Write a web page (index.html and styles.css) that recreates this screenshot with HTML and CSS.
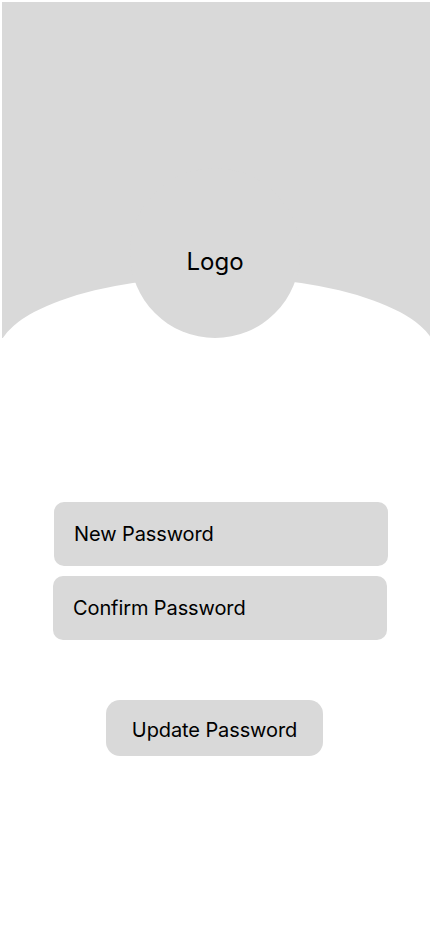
FILE: index.html
```html
<!DOCTYPE html>
<html lang="en">
<head>
<meta charset="utf-8">
<title>Update Password</title>
<link rel="stylesheet" href="styles.css">
</head>
<body>
<header class="hero">
  <div class="hero-cut"></div>
  <div class="logo-disc"><span class="logo-text">Logo</span></div>
</header>
<main class="form">
  <input class="field" type="password" placeholder="New Password">
  <input class="field field-second" type="password" placeholder="Confirm Password">
  <button class="submit" type="button">Update Password</button>
</main>
</body>
</html>
```
FILE: styles.css
```css
* { box-sizing: border-box; }
html, body { margin: 0; padding: 0; background: #fff; }
body {
  width: 430px;
  font-family: Inter, "Noto Sans", "Liberation Sans", sans-serif;
  color: #000;
}
.hero {
  position: relative;
  margin: 2px 0 0 2px;
  width: 428px;
  height: 336px;
  background: #d9d9d9;
  overflow: hidden;
}
.hero-cut {
  position: absolute;
  left: -5px;
  top: 275px;
  width: 440px;
  height: 158px;
  border-radius: 50%;
  background: #fff;
}
.logo-disc {
  position: absolute;
  left: 128px;
  top: 166px;
  width: 170px;
  height: 170px;
  border-radius: 50%;
  background: #d9d9d9;
  display: flex;
  justify-content: center;
  align-items: flex-start;
  padding-top: 79px;
}
.logo-text {
  font-size: 24px;
  line-height: 30px;
}
.form {
  display: flex;
  flex-direction: column;
  align-items: flex-start;
  padding: 164px 0 0 53px;
}
.field {
  display: block;
  width: 334px;
  height: 64px;
  margin: 0 0 10px 1px;
  padding: 0 20px;
  border: none;
  border-radius: 10px;
  background: #d9d9d9;
  font-family: Inter, "Noto Sans", "Liberation Sans", sans-serif;
  font-size: 20px;
  letter-spacing: -0.1px;
  color: #000;
  outline: none;
}
.field-second { margin-left: 0; }
.field::placeholder { color: #000; opacity: 1; }
.submit {
  align-self: flex-start;
  margin: 50px 0 0 53px;
  width: 217px;
  height: 56px;
  border: none;
  border-radius: 14px;
  background: #d9d9d9;
  font-family: Inter, "Noto Sans", "Liberation Sans", sans-serif;
  font-size: 20px;
  letter-spacing: -0.1px;
  color: #000;
  padding: 3px 0 0;
}
```
